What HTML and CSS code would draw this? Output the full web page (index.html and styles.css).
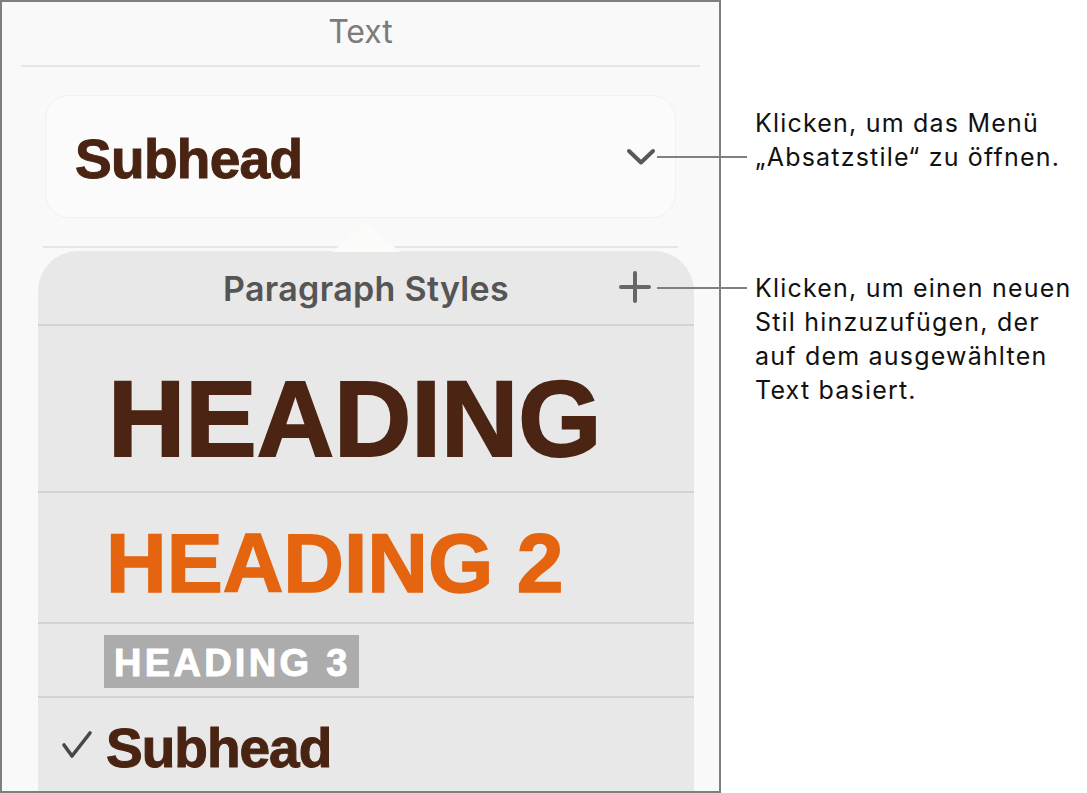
FILE: index.html
```html
<!DOCTYPE html>
<html lang="de">
<head>
<meta charset="utf-8">
<title>Absatzstile</title>
<link rel="stylesheet" href="styles.css">
</head>
<body>
  <div class="page">
    <section class="panel">
      <div class="panel-title">Text</div>
      <div class="rule rule-top"></div>

      <div class="style-picker">
        <span class="picker-label">Subhead</span>
        <svg class="chevron" width="30" height="18" viewBox="0 0 30 18" aria-hidden="true">
          <polyline points="3,3 15,14.5 27,3" fill="none" stroke="#575757" stroke-width="4" stroke-linecap="round" stroke-linejoin="round"/>
        </svg>
      </div>

      <div class="rule rule-mid"></div>

      <div class="popover">
        <svg class="popover-arrow" width="68" height="29" viewBox="0 0 68 29" aria-hidden="true">
          <path d="M0 29 L29 3 Q34 -1.5 39 3 L68 29 Z" fill="#fbfbfa"/>
        </svg>
        <div class="popover-head">
          <span class="popover-title">Paragraph Styles</span>
          <svg class="plus" width="34" height="34" viewBox="0 0 34 34" aria-hidden="true">
            <path d="M17 3 V31 M3 17 H31" stroke="#666" stroke-width="4" stroke-linecap="round"/>
          </svg>
        </div>
        <ul class="style-list">
          <li class="style-row row-heading"><span class="s-heading">HEADING</span></li>
          <li class="style-row row-heading2"><span class="s-heading2">HEADING 2</span></li>
          <li class="style-row row-heading3"><span class="s-heading3">HEADING 3</span></li>
          <li class="style-row row-subhead">
            <svg class="check" width="32" height="30" viewBox="0 0 32 30" aria-hidden="true">
              <polyline points="3,15 11,26 29,3" fill="none" stroke="#474747" stroke-width="3.6" stroke-linecap="round" stroke-linejoin="round"/>
            </svg>
            <span class="s-subhead">Subhead</span>
          </li>
        </ul>
      </div>
    </section>

    <aside class="notes">
      <p class="note note-menu">Klicken, um das Menü<br>„Absatzstile“ zu öffnen.</p>
      <p class="note note-add">Klicken, um einen neuen<br>Stil hinzuzufügen, der<br>auf dem ausgewählten<br>Text basiert.</p>
    </aside>
  </div>
</body>
</html>
```

FILE: styles.css
```css
* {
  box-sizing: border-box;
}

html,
body {
  margin: 0;
  padding: 0;
  background: #ffffff;
}

body {
  font-family: "Inter", "Roboto", "Liberation Sans", sans-serif;
}

.page {
  display: flex;
  align-items: flex-start;
  width: 1087px;
  height: 793px;
}

/* Inspector panel */
.panel {
  position: relative;
  flex: 0 0 721px;
  height: 793px;
  border: 2px solid #7e7e7e;
  background: #f9f9f9;
  overflow: hidden;
}

.panel-title {
  height: 63px;
  padding-bottom: 3px;
  line-height: 60px;
  text-align: center;
  font-size: 32px;
  color: #7b7b7b;
}

.rule {
  height: 2px;
  background: #e5e5e5;
}

.rule-top {
  margin: 0 19px;
}

.rule-mid {
  margin: 28px 0 0 41px;
  width: 635px;
}

/* Current style button */
.style-picker {
  display: flex;
  align-items: center;
  justify-content: space-between;
  margin: 28px 0 0 43px;
  width: 631px;
  height: 123px;
  padding: 0 19px 0 29px;
  border: 1px solid #f1f1f1;
  border-radius: 24px;
  background: #fbfbfb;
}

.picker-label {
  margin-top: 5px;
  font-family: "Liberation Sans", Arial, sans-serif;
  font-weight: 700;
  font-size: 55px;
  line-height: 55px;
  letter-spacing: -0.7px;
  color: #4a2413;
  -webkit-text-stroke: 1px #4a2413;
}

.chevron {
  display: block;
}

/* Paragraph styles popover */
.popover {
  position: relative;
  margin: 3px 0 0 36px;
  width: 656px;
  height: 560px;
  background: #e8e8e8;
  border-radius: 40px 40px 0 0;
}

.popover-arrow {
  position: absolute;
  left: 294px;
  top: -28px;
}

.popover-head {
  position: relative;
  height: 75px;
  padding-top: 3px;
  border-bottom: 2px solid #d3d3d3;
  text-align: center;
}

.popover-title {
  font-size: 34px;
  line-height: 69px;
  font-weight: 600;
  letter-spacing: 0.3px;
  color: #555555;
}

.plus {
  position: absolute;
  left: 580px;
  top: 19px;
}

.style-list {
  list-style: none;
  margin: 0;
  padding: 0;
}

.style-row {
  border-bottom: 2px solid #d3d3d3;
  font-family: "Liberation Sans", Arial, sans-serif;
  font-weight: 700;
  white-space: nowrap;
}

.row-heading {
  height: 167px;
  padding: 40px 0 0 70px;
}

.s-heading {
  display: block;
  font-size: 107px;
  line-height: 106px;
  color: #4b2413;
  -webkit-text-stroke: 2px #4b2413;
}

.row-heading2 {
  height: 131px;
  padding: 29px 0 0 68px;
}

.s-heading2 {
  display: block;
  font-size: 84px;
  line-height: 83px;
  color: #e4640f;
  -webkit-text-stroke: 1.5px #e4640f;
}

.row-heading3 {
  height: 74px;
  padding: 11px 0 0 66px;
}

.s-heading3 {
  display: inline-block;
  width: 255px;
  height: 53px;
  padding: 3px 0 0 10px;
  background: #acacac;
  font-size: 38px;
  line-height: 50px;
  letter-spacing: 3.3px;
  color: #ffffff;
  -webkit-text-stroke: 1px #ffffff;
}

.row-subhead {
  display: flex;
  align-items: flex-start;
  height: 120px;
  padding: 23px 0 0 23px;
  border-bottom: none;
}

.check {
  display: block;
  margin: 9px 13px 0 0;
}

.s-subhead {
  font-size: 55px;
  line-height: 55px;
  letter-spacing: -1px;
  color: #4a2413;
  -webkit-text-stroke: 1px #4a2413;
}

/* Callout notes */
.notes {
  flex: 1;
  padding-left: 34px;
}

.note {
  position: relative;
  margin: 0;
  font-size: 25px;
  line-height: 34px;
  letter-spacing: 1.2px;
  color: #111111;
  white-space: nowrap;
}

.note::before {
  content: "";
  position: absolute;
  left: -98px;
  width: 90px;
  height: 2px;
  background: #808080;
}

.note-menu {
  margin-top: 106px;
}

.note-menu::before {
  top: 50px;
}

.note-add {
  margin-top: 97px;
}

.note-add::before {
  top: 16px;
}
```
